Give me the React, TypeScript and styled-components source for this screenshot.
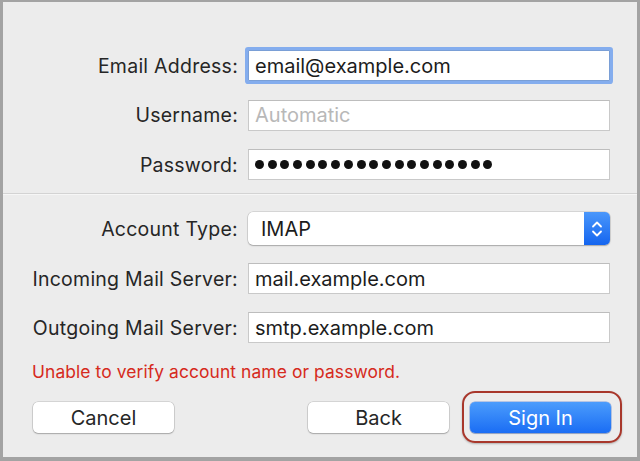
import styled, { createGlobalStyle } from "styled-components";

const GlobalStyle = createGlobalStyle`
  * {
    box-sizing: border-box;
  }
  body {
    margin: 0;
    background: #ececec;
    font-family: Inter, "Liberation Sans", Arial, sans-serif;
  }
`;

const Dialog = styled.div`
  width: 640px;
  height: 461px;
  background: #ececec;
  border: 2px solid #a3a3a3;
  border-left-width: 3px;
  border-right-width: 3px;
  border-bottom-width: 4px;
  display: flex;
  flex-direction: column;
`;

const Section = styled.div<{ $top: number; $gap: number }>`
  display: grid;
  grid-template-columns: 235px 362px;
  column-gap: 10px;
  row-gap: ${(p) => p.$gap}px;
  padding-top: ${(p) => p.$top}px;
  align-items: center;
`;

const Label = styled.label`
  text-align: right;
  font-size: 19.5px;
  color: #262626;
  letter-spacing: 0.25px;
  white-space: nowrap;
`;

const Field = styled.div<{ $focused?: boolean; $muted?: boolean }>`
  height: 31px;
  background: #fff;
  border: 1px solid #c9c9c9;
  border-top-color: #bdbdbd;
  display: flex;
  align-items: center;
  padding-left: 6px;
  font-size: 20px;
  color: ${(p) => (p.$muted ? "#b8b8b8" : "#1c1c1c")};
  ${(p) =>
    p.$focused &&
    `
    border-color: #7a9fd6;
    box-shadow: 0 0 0 3px #84adee;
    border-radius: 1px;
  `}
`;

const Dots = styled.div`
  display: flex;
  gap: 3.7px;
`;

const Dot = styled.span`
  width: 9px;
  height: 9px;
  border-radius: 50%;
  background: #111;
`;

const Divider = styled.div`
  margin-top: 13px;
  height: 2px;
  background: #d3d3d3;
  border-bottom: 1px solid #f6f6f6;
`;

const Popup = styled.div`
  height: 33px;
  background: #fff;
  border-radius: 5px;
  box-shadow: 0 0 0 0.5px rgba(0, 0, 0, 0.18), 0 1px 1.5px rgba(0, 0, 0, 0.22);
  display: flex;
  align-items: center;
  overflow: hidden;
`;

const PopupValue = styled.span`
  flex: 1;
  padding-left: 13px;
  font-size: 20px;
  color: #1c1c1c;
`;

const Stepper = styled.span`
  width: 26px;
  align-self: stretch;
  background: linear-gradient(#4a97fb, #1465ef);
  display: flex;
  align-items: center;
  justify-content: center;
`;

const ErrorText = styled.div`
  margin-top: 18px;
  padding-left: 29px;
  font-size: 17.4px;
  color: #d62a20;
  letter-spacing: 0.1px;
`;

const Buttons = styled.div`
  margin-top: 20px;
  padding: 0 26px 0 30px;
  display: flex;
  align-items: center;
`;

const Spacer = styled.div`
  flex: 1;
`;

const Button = styled.button<{ $primary?: boolean }>`
  width: 141px;
  height: 31px;
  border: none;
  border-radius: 5px;
  font-family: inherit;
  font-size: 20px;
  color: ${(p) => (p.$primary ? "#fff" : "#262626")};
  background: ${(p) =>
    p.$primary ? "linear-gradient(#4b9cfc, #1a6df4)" : "#fff"};
  box-shadow: ${(p) =>
    p.$primary
      ? "0 0 0 0.5px rgba(20, 80, 200, 0.5), 0 1px 1px rgba(0, 0, 0, 0.2)"
      : "0 0 0 0.5px rgba(0, 0, 0, 0.2), 0 1px 1.5px rgba(0, 0, 0, 0.22)"};
  padding: 0;
`;

const Highlight = styled.div`
  position: relative;
  margin-left: 21px;
  &::after {
    content: "";
    position: absolute;
    left: -8px;
    right: -11px;
    top: -11px;
    bottom: -10px;
    border: 2.5px solid #a8372b;
    border-radius: 13px;
    box-shadow: 0 1px 2px rgba(0, 0, 0, 0.25);
    pointer-events: none;
  }
`;

const Chevrons = () => (
  <svg width="12" height="22" viewBox="0 0 12 22">
    <path
      d="M2 8.5 L6 4.5 L10 8.5 M2 13.5 L6 17.5 L10 13.5"
      fill="none"
      stroke="#fff"
      strokeWidth="1.8"
      strokeLinecap="round"
      strokeLinejoin="round"
    />
  </svg>
);

export default function App() {
  return (
    <>
      <GlobalStyle />
      <Dialog>
        <Section $top={48} $gap={18.5}>
          <Label>Email Address:</Label>
          <Field $focused>email@example.com</Field>
          <Label>Username:</Label>
          <Field $muted>Automatic</Field>
          <Label>Password:</Label>
          <Field>
            <Dots>
              {Array.from({ length: 19 }, (_, i) => (
                <Dot key={i} />
              ))}
            </Dots>
          </Field>
        </Section>
        <Divider />
        <Section $top={17} $gap={18}>
          <Label>Account Type:</Label>
          <Popup>
            <PopupValue>IMAP</PopupValue>
            <Stepper>
              <Chevrons />
            </Stepper>
          </Popup>
          <Label>Incoming Mail Server:</Label>
          <Field>mail.example.com</Field>
          <Label>Outgoing Mail Server:</Label>
          <Field>smtp.example.com</Field>
        </Section>
        <ErrorText>Unable to verify account name or password.</ErrorText>
        <Buttons>
          <Button>Cancel</Button>
          <Spacer />
          <Button>Back</Button>
          <Highlight>
            <Button $primary>Sign In</Button>
          </Highlight>
        </Buttons>
      </Dialog>
    </>
  );
}
